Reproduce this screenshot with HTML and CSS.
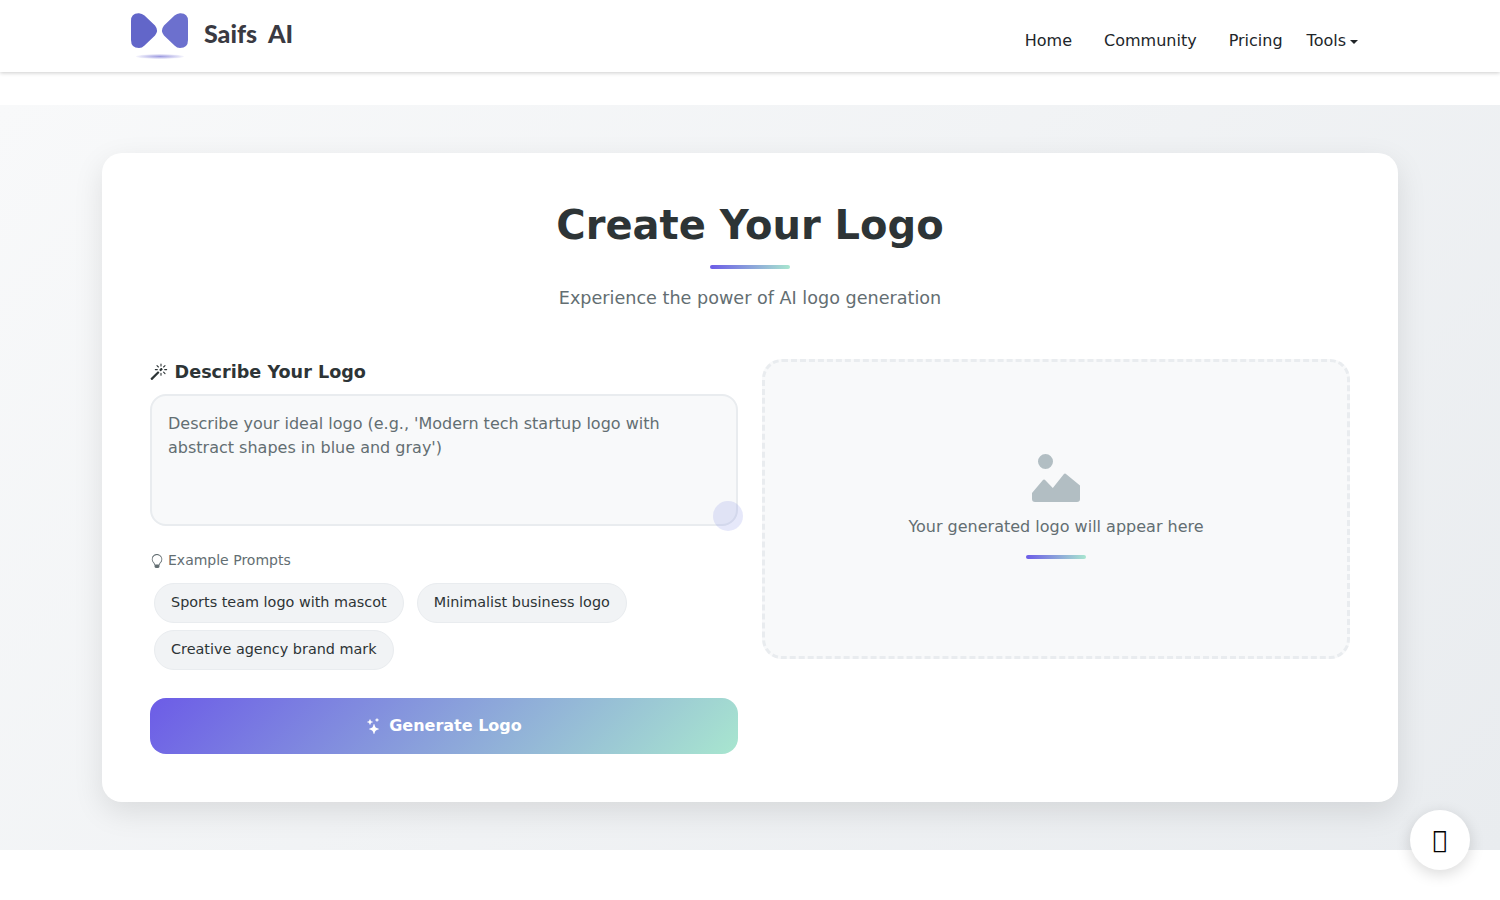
FILE: index.html
```html
<!DOCTYPE html>
<html lang="en">
<head>
<meta charset="utf-8">
<title>Saifs AI - Create Your Logo</title>
<link rel="stylesheet" href="styles.css">
</head>
<body>
<header class="navbar">
  <a class="brand" href="#">
    <span class="brand-mark">
      <svg width="57" height="36" viewBox="0 0 57 36" aria-hidden="true">
        <path d="M0 8Q0 0 8 .3Q11 .5 13.500 2.500L24 12.500Q28 17.500 24 22.500L13.500 32.500Q11 35 8 35Q0 35 0 27Z" fill="#6266c9"/>
        <path d="M57 8Q57 0 49 .3Q46 .5 43.500 2.500L33 12.500Q29 17.500 33 22.500L43.500 32.500Q46 35 49 35Q57 35 57 27Z" fill="#6c70ce"/>
      </svg>
      <span class="brand-shadow"></span>
    </span>
    <span class="brand-name">Saifs&nbsp;&nbsp;AI</span>
  </a>
  <nav class="nav-links">
    <a href="#">Home</a>
    <a href="#">Community</a>
    <a href="#">Pricing</a>
    <a href="#" class="dropdown">Tools<span class="caret"></span></a>
  </nav>
</header>

<main class="hero">
  <section class="card">
    <div class="card-head">
      <h1>Create Your Logo</h1>
      <div class="rule rule-title"></div>
      <p class="subtitle">Experience the power of AI logo generation</p>
    </div>
    <div class="columns">
      <div class="col-form">
        <h2 class="label">
          <svg class="icon-wand" viewBox="0 0 16 16" aria-hidden="true"><path d="M9.500 2.672a.5.5 0 1 0 1 0V.843a.5.5 0 0 0-1 0v1.829Zm4.500.035A.5.5 0 0 0 13.293 2L12 3.293a.5.5 0 1 0 .707.707L14 2.707ZM7.293 4A.5.5 0 1 0 8 3.293L6.707 2A.5.5 0 0 0 6 2.707L7.293 4Zm-.621 2.500a.5.5 0 1 0 0-1H4.843a.5.5 0 1 0 0 1h1.829Zm8.485 0a.5.5 0 1 0 0-1h-1.829a.5.5 0 0 0 0 1h1.829ZM13.293 10A.5.5 0 1 0 14 9.293L12.707 8a.5.5 0 1 0-.707.707L13.293 10ZM9.500 11.157a.5.5 0 0 0 1 0V9.328a.5.5 0 0 0-1 0v1.829Zm1.854-5.097a.5.5 0 0 0 0-.706l-.708-.708a.5.5 0 0 0-.707 0L8.646 5.940a.5.5 0 0 0 0 .707l.708.708a.5.5 0 0 0 .707 0l1.293-1.293Zm-3 3a.5.5 0 0 0 0-.706l-.708-.708a.5.5 0 0 0-.707 0L.646 13.940a.5.5 0 0 0 0 .707l.708.708a.5.5 0 0 0 .707 0L8.354 9.060Z"/></svg>
          Describe Your Logo
        </h2>
        <div class="prompt-wrap">
          <textarea class="prompt" placeholder="Describe your ideal logo (e.g., 'Modern tech startup logo with abstract shapes in blue and gray')"></textarea>
          <span class="orb"></span>
        </div>
        <div class="examples-title">
          <svg class="icon-bulb" viewBox="0 0 16 16" aria-hidden="true"><path d="M2 6a6 6 0 1 1 10.174 4.310c-.203.196-.359.4-.453.619l-.762 1.769A.5.5 0 0 1 10.500 13a.5.5 0 0 1 0 1 .5.5 0 0 1 0 1l-.224.447a1 1 0 0 1-.894.553H6.618a1 1 0 0 1-.894-.553L5.500 15a.5.5 0 0 1 0-1 .5.5 0 0 1 0-1 .5.5 0 0 1-.46-.302l-.761-1.770a1.964 1.964 0 0 0-.453-.618A5.984 5.984 0 0 1 2 6zm6-5a5 5 0 0 0-3.479 8.592c.263.254.514.564.676.941L5.830 12h4.342l.632-1.467c.162-.377.413-.687.676-.941A5 5 0 0 0 8 1z"/></svg>
          Example Prompts
        </div>
        <div class="chips">
          <button class="chip" type="button">Sports team logo with mascot</button>
          <button class="chip" type="button">Minimalist business logo</button>
          <button class="chip" type="button">Creative agency brand mark</button>
        </div>
        <button class="generate" type="button">
          <svg class="icon-stars" viewBox="0 0 16 16" aria-hidden="true"><path d="M7.657 6.247c.11-.33.576-.33.686 0l.645 1.937a2.890 2.890 0 0 0 1.829 1.828l1.936.645c.33.11.33.576 0 .686l-1.937.645a2.890 2.890 0 0 0-1.828 1.829l-.645 1.936a.361.361 0 0 1-.686 0l-.645-1.937a2.890 2.890 0 0 0-1.828-1.828l-1.937-.645a.361.361 0 0 1 0-.686l1.937-.645a2.890 2.890 0 0 0 1.828-1.828l.645-1.937zM3.794 1.148a.217.217 0 0 1 .412 0l.387 1.162c.173.518.579.924 1.097 1.097l1.162.387a.217.217 0 0 1 0 .412l-1.162.387A1.734 1.734 0 0 0 4.593 5.690l-.387 1.162a.217.217 0 0 1-.412 0L3.407 5.690A1.734 1.734 0 0 0 2.310 4.593l-1.162-.387a.217.217 0 0 1 0-.412l1.162-.387A1.734 1.734 0 0 0 3.407 2.310l.387-1.162zM10.863.099a.145.145 0 0 1 .274 0l.258.774c.115.346.386.617.732.732l.774.258a.145.145 0 0 1 0 .274l-.774.258a1.156 1.156 0 0 0-.732.732l-.258.774a.145.145 0 0 1-.274 0l-.258-.774a1.156 1.156 0 0 0-.732-.732L9.100 2.137a.145.145 0 0 1 0-.274l.774-.258c.346-.115.617-.386.732-.732L10.863.100z"/></svg>
          Generate Logo
        </button>
      </div>
      <div class="col-preview">
        <div class="preview">
          <svg class="icon-image" viewBox="0 0 16 16" aria-hidden="true"><path d="M7 2.500a2.500 2.500 0 1 1-5 0 2.500 2.500 0 0 1 5 0zm4.225 4.053a.5.5 0 0 0-.577.093l-3.710 4.710-2.660-2.772a.5.5 0 0 0-.63.062L.002 13v2a1 1 0 0 0 1 1h14a1 1 0 0 0 1-1v-4.500l-4.777-3.947z"/></svg>
          <p class="preview-text">Your generated logo will appear here</p>
          <div class="rule rule-preview"></div>
        </div>
      </div>
    </div>
  </section>
</main>

<button class="chat-fab" type="button"><span class="tofu">&#xF4AD;</span></button>
</body>
</html>
```
FILE: styles.css
```css
* { box-sizing: border-box; }
html, body { margin: 0; padding: 0; }
body {
  height: 900px;
  overflow: hidden;
  background: #fff;
  font-family: "DejaVu Sans", sans-serif;
  color: #2d3436;
  font-size: 16px;
  line-height: 1.5;
}
a { text-decoration: none; color: inherit; }

.navbar {
  height: 72px;
  display: flex;
  align-items: flex-start;
  justify-content: space-between;
  padding: 0 142px 0 131px;
  background: #fff;
  box-shadow: 0 1px 4px rgba(0, 0, 0, .2);
  position: relative;
}
.brand { display: flex; align-items: flex-start; gap: 16px; padding-top: 13px; }
.brand-mark { display: flex; flex-direction: column; align-items: center; width: 57px; }
.brand-mark svg { display: block; }
.brand-shadow {
  width: 48px; height: 5px; margin-top: 5px; border-radius: 50%;
  background: radial-gradient(closest-side, #9c9ae0, rgba(168, 166, 228, .1));
}
.brand-name {
  font-family: "Lato", sans-serif;
  font-weight: 900;
  font-size: 25px;
  line-height: 40px;
  color: #3a3a42;
}
.nav-links { display: flex; align-items: center; gap: 32px; height: 81px; }
.nav-links a { color: #212529; }
.dropdown { display: flex; align-items: center; margin-left: -8px; }
.caret {
  width: 0; height: 0; margin-left: 4px; margin-top: 3px;
  border-top: 4px solid #212529;
  border-left: 4px solid transparent;
  border-right: 4px solid transparent;
}

.hero {
  margin-top: 33px;
  height: 745px;
  padding: 48px 102px;
  background: linear-gradient(135deg, #f8f9fa 0%, #e9ecef 100%);
}
.card {
  height: 649px;
  padding: 48px;
  background: #fff;
  border-radius: 20px;
  box-shadow: 0 10px 30px rgba(0, 0, 0, .1);
}
.card-head { text-align: center; }
h1 {
  margin: 0;
  font-size: 40px;
  font-weight: 700;
  line-height: 48px;
  color: #2d3436;
}
.rule {
  height: 4px;
  border-radius: 2px;
  background: linear-gradient(90deg, #6c5ce7, #a8e6cf);
}
.rule-title { width: 80px; margin: 16px auto 0; }
.subtitle {
  margin: 16px 0 0;
  font-size: 17.600px;
  line-height: 26px;
  color: #636e72;
}
.columns { display: grid; grid-template-columns: 588px 588px; gap: 24px; margin-top: 48px; }
.label {
  margin: 0 0 8.600px;
  display: flex;
  align-items: center;
  gap: 7px;
  font-size: 17.600px;
  font-weight: 700;
  line-height: 26.400px;
  color: #2d3436;
}
.icon-wand { width: 17.600px; height: 17.600px; fill: #2d3436; }
.prompt-wrap { position: relative; height: 132px; }
.prompt {
  display: block;
  width: 100%;
  height: 132px;
  padding: 16px;
  resize: none;
  border: 2px solid #e9ecef;
  border-radius: 16px;
  background: #f8f9fa;
  font: 16px/24px "DejaVu Sans", sans-serif;
  color: #2d3436;
  outline: none;
}
.prompt::placeholder { color: #636e72; opacity: 1; }
.orb {
  position: absolute;
  right: -5px;
  bottom: -5px;
  width: 30px;
  height: 30px;
  border-radius: 50%;
  background: rgba(100, 110, 225, .16);
}
.examples-title {
  margin-top: 24px;
  display: flex;
  align-items: center;
  gap: 4px;
  font-size: 14px;
  line-height: 21px;
  color: #636e72;
}
.icon-bulb { width: 14px; height: 14px; fill: #636e72; }
.chips { display: flex; flex-wrap: wrap; gap: 7.400px 13px; margin: 8px 0 0; padding: 4px; }
.chip {
  height: 39.600px;
  padding: 0 16px;
  border: 1px solid #e9ecef;
  border-radius: 20px;
  background: #f1f3f5;
  font: 14.400px/21.600px "DejaVu Sans", sans-serif;
  color: #2d3436;
}
.generate {
  width: 100%;
  height: 56px;
  margin-top: 24.600px;
  display: flex;
  align-items: center;
  justify-content: center;
  gap: 7px;
  border: 0;
  border-radius: 16px;
  background: linear-gradient(135deg, #6c5ce7, #a8e6cf);
  color: #fff;
  font: 700 16px/24px "DejaVu Sans", sans-serif;
}
.icon-stars { width: 16px; height: 16px; fill: #fff; }
.preview {
  height: 300px;
  padding-bottom: 5px;
  display: flex;
  flex-direction: column;
  align-items: center;
  justify-content: center;
  border: 3px dashed #e9ecef;
  border-radius: 20px;
  background: #f8f9fa;
}
.icon-image { width: 48px; height: 48px; fill: #b2bec3; }
.preview-text { margin: 13px 0 0; color: #636e72; font-size: 16px; line-height: 24px; }
.rule-preview { width: 60px; margin-top: 16px; }
.chat-fab {
  position: absolute;
  left: 1410px;
  top: 810px;
  width: 60px;
  height: 60px;
  padding: 0;
  border: 0;
  border-radius: 50%;
  background: #fff;
  box-shadow: 0 4px 15px rgba(0, 0, 0, .15);
  color: #000;
  font: 24px/36px "DejaVu Sans", sans-serif;
}
```
